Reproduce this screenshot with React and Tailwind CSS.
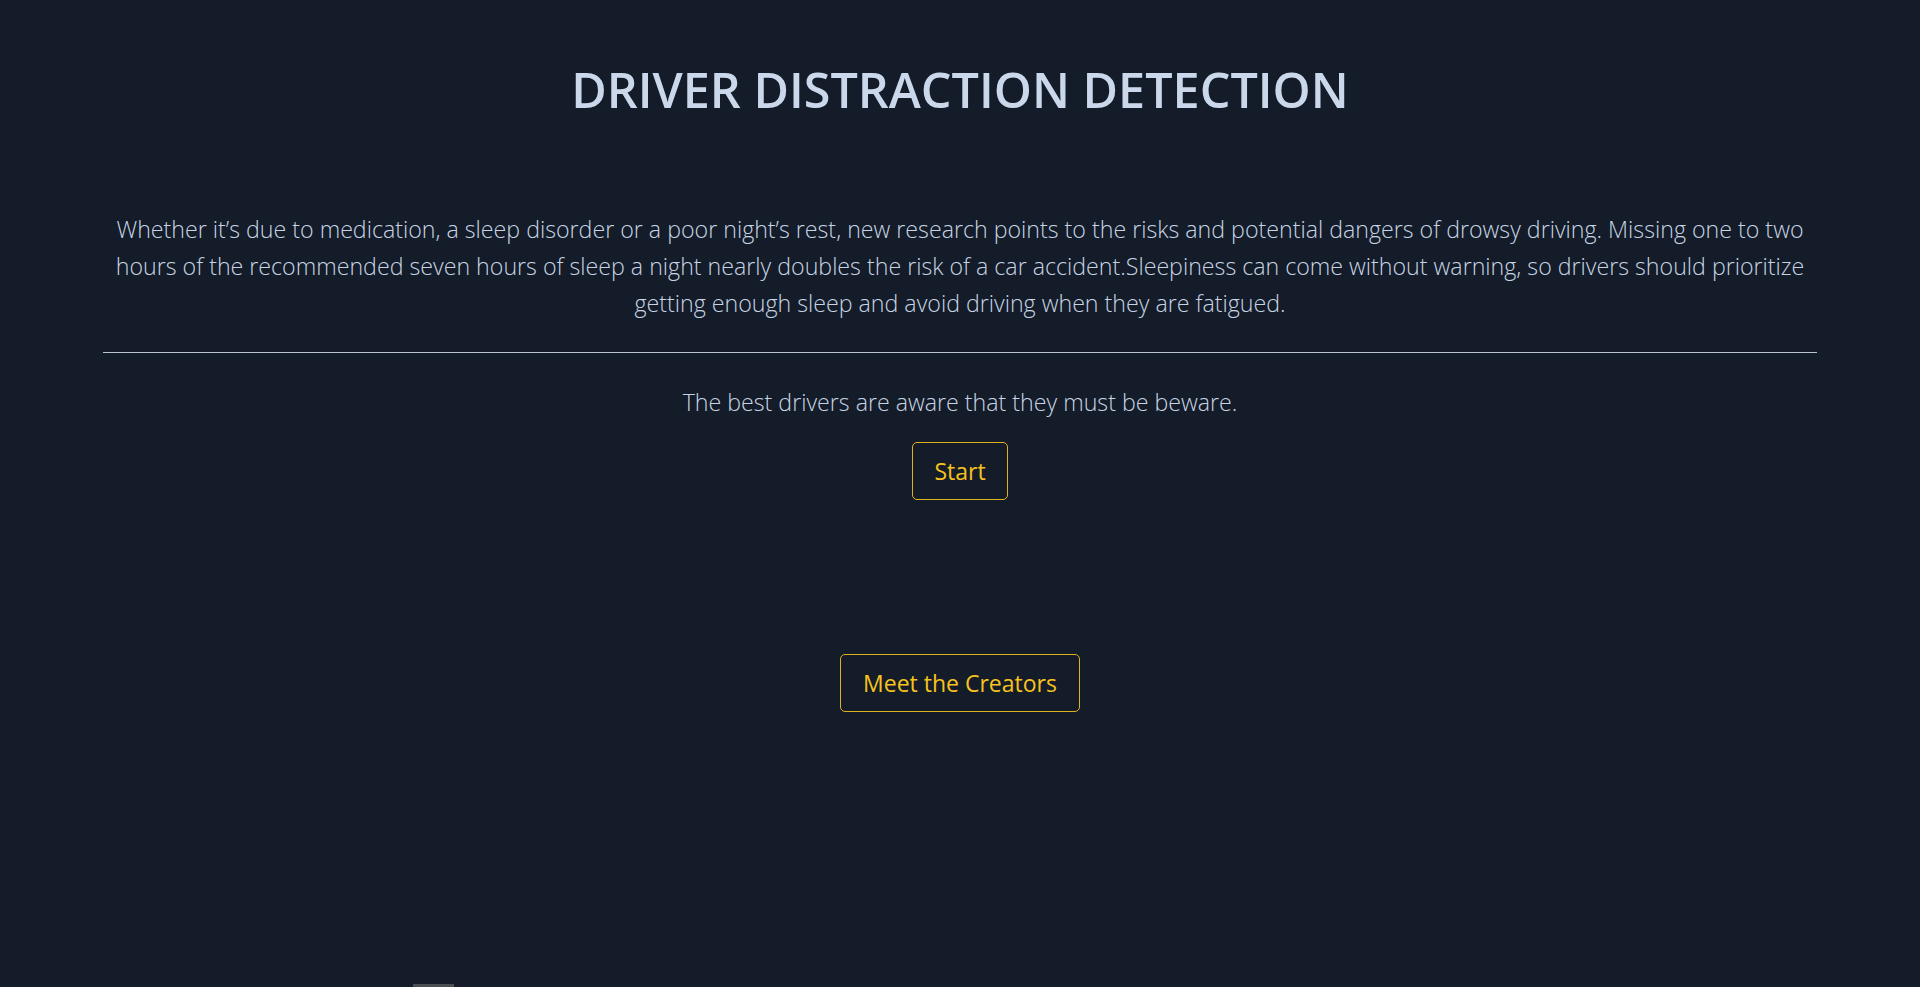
import React from "react";

const App = () => {
    return (
        <div className="min-h-screen w-full flex flex-col bg-[#131c28] font-['Open_Sans',sans-serif] overflow-hidden">
            <div className="px-[103px] pt-[60px] flex flex-col items-center">

                {/* Title */}
                <h1 className="text-[48.5px] leading-[1.2] font-semibold text-[#cbd8eb]">
                    DRIVER DISTRACTION DETECTION
                </h1>

                {/* Intro */}
                <p className="mt-[93px] text-[23.2px] leading-[37px] font-light text-[#c8d4e5] text-center">
                    Whether it’s due to medication, a sleep disorder or a poor night’s rest, new research points to the risks and potential dangers of drowsy driving. Missing one to two hours of the recommended seven hours of sleep a night nearly doubles the risk of a car accident.Sleepiness can come without warning, so drivers should prioritize getting enough sleep and avoid driving when they are fatigued.
                </p>

                <hr className="w-full mt-[30px] border-0 h-px bg-[#b9c4d3]" />

                {/* Tagline + start */}
                <p className="mt-[29px] text-[23.2px] leading-[40px] font-light text-[#c8d4e5]">
                    The best drivers are aware that they must be beware.
                </p>
                <button className="mt-[20px] px-[21px] py-[8px] text-[23px] leading-[40px] text-[#f7c21f] border border-[#e1b21f] rounded-[5px]">
                    Start
                </button>

                <button className="mt-[154px] px-[22px] py-[8px] text-[23px] leading-[40px] text-[#f7c21f] border border-[#e1b21f] rounded-[5px]">
                    Meet the Creators
                </button>
            </div>

            {/* strip at the bottom edge */}
            <div className="mt-auto h-[3px] flex">
                <div className="ml-[413px] w-[41px] bg-[#4a4d52]" />
            </div>
        </div>
    );
};

export default App;
